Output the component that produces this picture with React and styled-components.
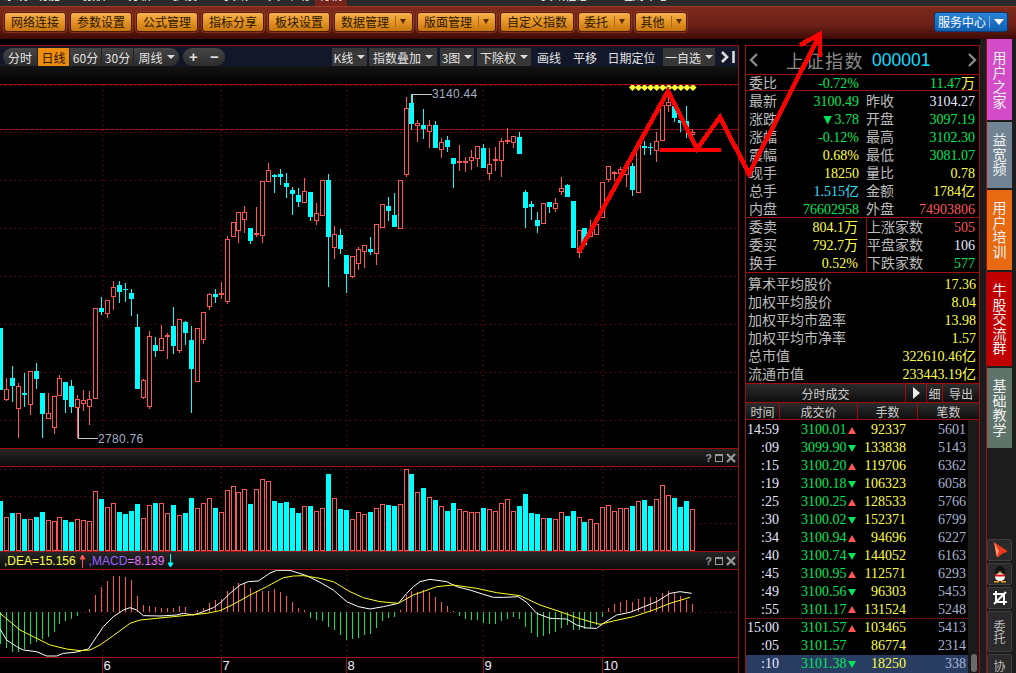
import React from "react";
import styled, { createGlobalStyle } from "styled-components";

const CJK = `"Noto Sans CJK SC", "Liberation Sans", sans-serif`;
const NUM = `"Liberation Serif", "Noto Sans CJK SC", serif`;
const LINE = "#a00d0d";
const RED = "#ff5555";
const CYAN = "#00ffff";
const GREEN = "#00e65c";
const YELLOW = "#ffff44";
const GRID = "#8c0000";

const Global = createGlobalStyle`
  html, body { margin: 0; padding: 0; background: #000; }
  * { box-sizing: border-box; }
`;

const Page = styled.div`
  position: relative;
  width: 1016px;
  height: 673px;
  overflow: hidden;
  background: #000;
  font-family: ${CJK};
  display: flex;
  flex-direction: column;
`;

const TopMenu = styled.div`
  height: 6px;
  flex: none;
  display: flex;
  overflow: hidden;
  background: #2b2b2b;
`;
const TopItem = styled.div`
  width: ${(p) => p.$w}px;
  flex: none;
  color: #fff;
  font-size: 12px;
  line-height: 14px;
  margin-top: -12px;
  padding-left: 4px;
  height: 18px;
  white-space: nowrap;
  background: ${(p) => (p.$active ? "#74241a" : "transparent")};
`;

const Toolbar = styled.div`
  height: 33px;
  flex: none;
  display: flex;
  align-items: center;
  gap: 4px;
  padding: 1px 8px 4px 4px;
  border-top: 1px solid #a03a22;
  background: linear-gradient(#7c2a1c, #6d2218 55%, #3f0a06);
`;
const ToolButton = styled.div`
  height: 20px;
  width: ${(p) => p.$w}px;
  flex: none;
  display: flex;
  align-items: center;
  justify-content: center;
  gap: 3px;
  border: 1px solid #4b1a08;
  border-radius: 3px;
  box-shadow: 0 0 0 1px rgba(165, 70, 40, 0.6);
  background: linear-gradient(#f7b04e, #e59523 50%, #c7750f);
  color: #2b1400;
  font-size: 12px;
  line-height: 18px;
`;
const ToolArrow = styled.span`
  margin-left: 3px;
  padding-left: 4px;
  border-left: 1px solid #a9691c;
  height: 11px;
  display: flex;
  align-items: center;
  &::after {
    content: "";
    border-left: 3.5px solid transparent;
    border-right: 3.5px solid transparent;
    border-top: 5px solid #5a2c06;
  }
`;
const ServiceButton = styled.div`
  margin-left: auto;
  width: 74px;
  height: 20px;
  flex: none;
  display: flex;
  align-items: center;
  border: 1px solid #0a3a70;
  border-radius: 3px;
  background: linear-gradient(#2a84d8, #0f5fb0);
  color: #fff;
  font-size: 12px;
`;
const ServiceLabel = styled.span`
  flex: 1;
  text-align: center;
  border-right: 1px solid #7fb0e0;
  line-height: 12px;
`;
const ServiceArrow = styled.span`
  width: 17px;
  display: flex;
  justify-content: center;
  &::after {
    content: "";
    border-left: 5px solid transparent;
    border-right: 5px solid transparent;
    border-top: 6px solid #fff;
  }
`;

const Main = styled.div`
  flex: 1;
  display: flex;
  min-height: 0;
`;
const ChartColumn = styled.div`
  width: 739px;
  flex: none;
  margin-top: 6px;
  display: flex;
  flex-direction: column;
  border-top: 1px solid ${LINE};
  border-right: 1px solid ${LINE};
`;
const SubBar = styled.div`
  height: 20px;
  flex: none;
  display: flex;
  align-items: center;
  padding: 2px 0 0 3px;
  background: #121829;
  color: #e2e2e2;
  font-size: 12px;
`;
const Pill = styled.div`
  height: 18px;
  display: flex;
  align-items: stretch;
  border-radius: 9px;
  overflow: hidden;
  margin-right: ${(p) => p.$mr || 0}px;
  background: linear-gradient(#454545, #2c2c2c);
`;
const Seg = styled.div`
  width: ${(p) => p.$w}px;
  display: flex;
  align-items: center;
  justify-content: center;
  gap: 4px;
  border-right: ${(p) => (p.$last ? "none" : "1px solid #222")};
  background: ${(p) => (p.$on ? "#ec8d10" : "transparent")};
  color: ${(p) => (p.$on ? "#2a1400" : "#e2e2e2")};
  font-size: 12px;
`;
const Caret = styled.i`
  border-left: 4px solid transparent;
  border-right: 4px solid transparent;
  border-top: 4px solid #ddd;
`;
const PillGlyph = styled.div`
  width: 21px;
  display: flex;
  align-items: center;
  justify-content: center;
  color: #ddd;
  font: 700 15px/16px "Liberation Sans", sans-serif;
`;
const BarBox = styled.div`
  height: 18px;
  width: ${(p) => p.$w}px;
  margin-left: ${(p) => p.$ml}px;
  display: flex;
  align-items: center;
  justify-content: center;
  gap: 4px;
  flex: none;
  white-space: nowrap;
  background: ${(p) => (p.$plain ? "transparent" : "#373737")};
`;
const Fade = styled.div`
  height: 19px;
  flex: none;
  background: linear-gradient(#141414, #000);
  border-bottom: 1px solid ${LINE};
`;
const PaneHead = styled.div`
  height: 19px;
  flex: none;
  display: flex;
  align-items: center;
  padding: 0 2px 0 4px;
  border-top: 1px solid ${LINE};
  border-bottom: 1px solid ${LINE};
  background: linear-gradient(#262626, #0c0c0c);
  font: 12px "Liberation Sans", sans-serif;
`;
const HeadText = styled.span`
  color: ${(p) => p.$c};
  white-space: pre;
`;
const HeadArrow = styled.svg`
  margin: 0 3px;
  flex: none;
`;
const PaneTools = styled.div`
  margin-left: auto;
  display: flex;
  align-items: center;
  gap: 3px;
  color: #9a9a9a;
  font: 700 11px "Liberation Sans", sans-serif;
`;
const ToolSquare = styled.i`
  width: 8px;
  height: 8px;
  border: 1px solid #9a9a9a;
  border-top-width: 2px;
`;
const ChartSvg = styled.svg`
  display: block;
  flex: none;
`;
const AxisBar = styled.div`
  height: 16px;
  flex: none;
  border-top: 1px solid ${LINE};
`;

const Quote = styled.div`
  width: 235px;
  flex: none;
  margin: 6px 0 0 6px;
  display: flex;
  flex-direction: column;
  border: 1px solid ${LINE};
  border-bottom: none;
  font-family: ${NUM};
  font-size: 14px;
  color: #bcbcbc;
`;
const QuoteHead = styled.div`
  height: 29px;
  flex: none;
  display: flex;
  align-items: center;
  padding: 0 3px;
  border-bottom: 1px solid ${LINE};
`;
const QuoteName = styled.span`
  margin-left: 27px;
  color: #8a8a8a;
  font-size: 18px;
  letter-spacing: 1.5px;
  font-family: ${CJK};
  white-space: nowrap;
`;
const QuoteCode = styled.span`
  margin-left: 8px;
  color: #10dcff;
  font-size: 17.5px;
  font-family: "Liberation Sans", sans-serif;
`;
const Chevron = styled.svg`
  flex: none;
  margin-left: ${(p) => p.$ml || 0}px;
`;
const Section = styled.div`
  flex: none;
  display: flex;
  flex-direction: column;
  padding: ${(p) => p.$pad || "0"};
  border-bottom: 1px solid ${LINE};
`;
const Row = styled.div`
  height: ${(p) => p.$h || 18}px;
  display: grid;
  grid-template-columns: ${(p) => p.$cols || "119px 114px"};
  line-height: ${(p) => p.$lh || 18}px;
  white-space: nowrap;
`;
const Cell = styled.div`
  display: flex;
  justify-content: space-between;
  padding: 0 ${(p) => p.$pr ?? 4}px 0 ${(p) => p.$pl ?? 1}px;
`;
const Val = styled.span`
  color: ${(p) => p.$c || "#e8e8ff"};
`;
const Split = styled.div`
  display: flex;
  flex-direction: column;
  border-right: ${(p) => (p.$sep ? `1px solid ${LINE}` : "none")};
  flex: none;
`;

const DarkRow = styled.div`
  height: ${(p) => p.$h}px;
  flex: none;
  display: flex;
  border-bottom: 1px solid ${LINE};
  background: linear-gradient(#2c2c2c, #0f0f0f);
  font-family: ${CJK};
  font-size: 12px;
  color: #ccc;
`;
const DarkCell = styled.div`
  width: ${(p) => p.$w}px;
  flex: ${(p) => (p.$w ? "none" : 1)};
  display: flex;
  align-items: center;
  justify-content: center;
  border-right: ${(p) => (p.$last ? "none" : `1px solid ${LINE}`)};
`;
const PlayTri = styled.i`
  border-top: 6px solid transparent;
  border-bottom: 6px solid transparent;
  border-left: 7px solid #eee;
`;
const TickWrap = styled.div`
  flex: 1;
  display: flex;
  min-height: 0;
`;
const TickList = styled.div`
  width: 222px;
  flex: none;
  padding-top: 1px;
`;
const TickRow = styled.div`
  height: 18px;
  display: flex;
  align-items: center;
  line-height: 18px;
  white-space: nowrap;
  background: ${(p) => (p.$sel ? "#293c62" : "transparent")};
  border-bottom: ${(p) => (p.$cut ? "1px dotted #c00" : "none")};
`;
const TTime = styled.span`
  width: 33px;
  text-align: right;
  color: #e8e8ff;
`;
const TPrice = styled.span`
  width: 47px;
  margin-left: 22px;
  color: ${GREEN};
`;
const TMark = styled.span`
  width: 16px;
  display: flex;
  align-items: center;
  &::after {
    content: "";
    display: ${(p) => (p.$d ? "block" : "none")};
    border-left: 4px solid transparent;
    border-right: 4px solid transparent;
    border-bottom: ${(p) => (p.$d === "u" ? `7px solid ${RED}` : "none")};
    border-top: ${(p) => (p.$d === "d" ? `7px solid ${GREEN}` : "none")};
  }
`;
const TVol = styled.span`
  width: 42px;
  text-align: right;
  color: ${YELLOW};
`;
const TCnt = styled.span`
  width: 60px;
  text-align: right;
  color: #a8b4d0;
`;
const Scroll = styled.div`
  flex: 1;
  background: #1b1b1b;
  display: flex;
  flex-direction: column;
  justify-content: flex-end;
  align-items: center;
  padding-bottom: 1px;
`;
const Thumb = styled.div`
  width: 6px;
  height: 18px;
  border-radius: 3px;
  background: #6a6a6a;
`;

const RailGap = styled.div`
  width: 7px;
  flex: none;
  background: #1c1c1c;
  border-right: 1px solid ${LINE};
`;
const Rail = styled.div`
  flex: 1;
  background: #1c1c1c;
  display: flex;
  flex-direction: column;
  padding: 0 4px 0 0;
  gap: 2px;
  overflow: hidden;
`;
const RailTab = styled.div`
  height: ${(p) => p.$h}px;
  flex: none;
  display: flex;
  align-items: center;
  justify-content: center;
  background: ${(p) => p.$bg};
  color: #f2f2f2;
  font-size: 14px;
  line-height: 14px;
  writing-mode: vertical-rl;
  text-orientation: upright;
  letter-spacing: 0.5px;
`;
const RailSpacer = styled.div`
  height: 87px;
  flex: none;
`;
const RailIcon = styled.div`
  height: ${(p) => p.$h || 22}px;
  flex: none;
  display: flex;
  align-items: center;
  justify-content: center;
  background: #2a2a2a;
  border: 1px solid #3d3d3d;
  border-radius: 2px;
  color: #bbb;
  font-size: 12px;
  line-height: 13px;
  writing-mode: ${(p) => (p.$text ? "vertical-rl" : "horizontal-tb")};
  text-orientation: upright;
`;
const Overlay = styled.svg`
  position: absolute;
  left: 0;
  top: 0;
  pointer-events: none;
`;

/* ---- data, in page pixels ---- */
const CANDLES = `c 328 328 390 390|r 378 389 400 401|c 366 378 386 402|r 383 386 409 438|c 373 393 395 407|r 371 371 405 415|c 363 371 379 389|c 393 393 414 438|r 393 413 419 419|r 396 396 428 434|r 375 378 396 396|c 382 382 400 413|c 380 386 407 413|r 395 399 408 438|r 390 400 404 411|r 391 399 407 425|r 308 308 399 399|c 297 308 312 315|r 300 300 314 318|r 281 287 297 310|c 281 285 292 303|c 283 289 290 302|c 289 293 299 316|c 314 327 389 389|r 379 380 398 399|r 331 336 407 409|c 337 345 351 357|r 325 338 351 351|r 333 335 337 359|c 307 326 346 354|r 319 319 351 353|c 321 322 333 345|c 326 340 369 413|r 328 328 382 382|r 312 312 340 344|r 293 294 307 310|c 289 294 297 303|r 282 293 295 299|r 236 239 302 304|r 222 222 237 237|r 212 212 231 243|r 206 212 220 233|c 228 228 241 244|r 207 233 235 237|r 181 181 236 243|r 163 170 182 182|c 174 175 177 193|c 169 174 177 185|c 173 183 187 198|c 187 190 194 215|c 188 195 202 207|r 178 191 203 203|c 192 192 217 221|r 203 213 221 225|r 180 180 216 216|c 174 180 237 287|r 226 234 248 259|c 229 235 249 254|c 255 255 274 293|r 256 256 277 278|r 247 249 264 270|r 245 245 252 268|c 237 249 252 255|r 224 224 254 265|r 204 204 228 228|c 197 206 211 221|c 193 215 227 227|r 180 180 229 229|r 97 108 175 177|c 94 103 124 130|r 120 123 126 142|c 109 125 129 139|r 120 125 132 148|c 121 125 148 148|r 138 142 150 158|c 136 140 147 152|c 158 158 164 188|r 145 161 162 171|r 157 161 163 172|r 150 157 161 170|r 146 146 159 167|c 144 148 168 168|r 148 164 174 180|r 147 159 161 171|r 138 141 161 177|r 128 140 142 144|r 136 136 143 148|c 132 137 154 154|c 190 192 208 228|c 201 204 207 220|c 212 220 226 233|r 203 203 224 224|c 202 202 207 213|r 198 203 209 212|r 177 188 192 195|c 184 185 197 197|c 201 201 248 248|r 230 230 253 258|c 228 228 245 245|r 220 230 237 237|r 224 224 235 235|r 182 182 218 218|r 166 166 180 182|r 171 172 173 181|r 167 169 174 174|r 165 165 175 187|c 163 166 190 196|r 145 145 193 193|c 141 146 148 155|c 143 147 148 155|r 132 141 151 162|r 99 105 141 141|r 97 102 106 112|c 106 106 118 122|c 112 120 123 132|c 106 121 129 138|r 129 132 135 145`
  .split("|")
  .map((s) => {
    const [t, a, b, c, d] = s.split(" ");
    return { up: t === "r", hi: +a, top: +b, bot: +c, lo: +d };
  });

const VOL = "c168 r216 c204 r205 c222 r222 c216 c201 r226 r229 r217 c225 c231 r223 r226 r229 r139 c162 r187 r175 c201 c207 c198 c177 r220 r181 c174 r175 r205 c180 r211 c204 c159 r190 r175 r160 c189 r202 r136 r124 r142 r133 c177 r133 r103 r109 c168 c174 c171 c189 c204 r184 c183 r198 r190 c87 r160 c192 c195 r223 r202 r207 c201 r190 r178 c180 c183 r178 r73 c87 r142 c129 r157 c165 r184 c198 c174 r193 r199 r202 r202 c189 r193 r199 r175 r163 r199 c183 c147 c204 c207 r220 c219 r223 r202 c213 c198 r217 c231 r223 r235 r187 r181 r199 r190 r190 c183 r169 c165 c183 r163 r121 r151 c159 c186 c168 r193"
  .split(" ")
  .map((s) => ({ up: s[0] === "r", top: 445 + +s.slice(1) / 3 }));

const MACD = [598,610,622,620,612,597,590,582,576,560,538,527,522,512,0,491,450,426,408,393,393,396,405,453,480,483,486,489,489,489,483,486,500,495,489,474,465,462,438,423,414,414,429,438,438,438,432,441,453,471,489,495,519,525,528,546,555,570,585,582,579,570,567,549,528,520,516,495,450,438,441,435,440,456,471,483,499,513,522,525,525,535,537,537,528,522,516,522,546,564,576,573,567,561,549,540,555,555,552,549,540,516,489,477,471,465,471,462,456,456,456,444,438,441,453,465,477];

const toPts = (arr, off = 0) =>
  arr.map(([x, y]) => `${(x + off) / 3},${445 + y / 3}`).join(" ");

const WHITE_L = [[0,552],[20,585],[50,605],[70,615],[110,620],[140,633],[170,633],[190,625],[225,622],[265,612],[290,575],[310,545],[340,515],[370,495],[390,488],[410,495],[430,512],[480,513],[530,510],[550,505],[580,510],[610,500],[640,488],[665,470],[690,445],[720,420],[745,410],[775,408],[810,384],[830,376],[870,376],[920,392],[960,412],[1000,435],[1040,470],[1075,485],[1110,492]];
const WHITE_R = [[0,492],[40,485],[85,475],[110,445],[130,425],[150,410],[180,403],[230,410],[260,425],[300,435],[340,448],[370,457],[400,457],[445,455],[470,472],[500,505],[540,520],[590,522],[620,540],[650,549],[680,550],[700,535],[740,510],[780,502],[810,490],[860,470],[900,445],[930,440],[965,445]];
const YEL_L = [[0,505],[30,530],[60,555],[100,575],[150,600],[200,612],[240,617],[270,615],[300,600],[340,572],[390,535],[420,525],[470,520],[520,515],[570,510],[620,505],[660,497],[700,478],[750,450],[800,425],[850,398],[880,393],[910,392],[960,400],[1000,410],[1050,440],[1090,458],[1110,463]];
const YEL_R = [[0,463],[30,470],[85,475],[130,450],[200,425],[250,420],[320,430],[380,443],[450,452],[510,480],[570,500],[620,518],[660,530],[690,538],[730,528],[790,515],[850,495],[900,475],[960,457]];

const xAt = (i) => Math.floor(0.33 + 5.966 * i);
const VGRID = [102, 221, 346, 483, 602];

function GridLines({ y1, y2, rows }) {
  return (
    <g stroke={GRID} strokeDasharray="1 4" shapeRendering="crispEdges">
      {VGRID.map((x) => (
        <line key={x} x1={x + 0.5} x2={x + 0.5} y1={y1} y2={y2} />
      ))}
      {rows.map((y) => (
        <line key={y} x1={0} x2={738} y1={y + 0.5} y2={y + 0.5} />
      ))}
    </g>
  );
}

function Candle({ c, x }) {
  const col = c.up ? RED : CYAN;
  return (
    <g shapeRendering="crispEdges">
      <line x1={x + 0.5} x2={x + 0.5} y1={c.hi} y2={c.top} stroke={col} />
      <line x1={x + 0.5} x2={x + 0.5} y1={c.bot} y2={c.lo} stroke={col} />
      {c.up ? (
        <rect x={x - 1.5} y={c.top + 0.5} width={4} height={Math.max(c.bot - c.top - 1, 1)} fill="#000" stroke={col} />
      ) : (
        <rect x={x - 2} y={c.top} width={5} height={Math.max(c.bot - c.top, 1)} fill={col} />
      )}
    </g>
  );
}

function MainChart() {
  return (
    <ChartSvg width={738} height={363} viewBox="0 85 738 363">
      <GridLines y1={85} y2={448} rows={[85, 132, 180, 228, 276, 324, 372, 420]} />
      <line x1={0} x2={738} y1={129.5} y2={129.5} stroke="#b00d0d" strokeDasharray="4 1" shapeRendering="crispEdges" />
      {CANDLES.map((c, i) => (
        <Candle key={i} c={c} x={xAt(i)} />
      ))}
      <polyline points="412,103 412,94 432,94" fill="none" stroke="#c8c8c8" shapeRendering="crispEdges" />
      <text x={432} y={98} fill="#a3aec4" fontSize={12} fontFamily="Liberation Sans" letterSpacing={0.3}>3140.44</text>
      <polyline points="78,408 78,438.5 98,438.5" fill="none" stroke="#c8c8c8" shapeRendering="crispEdges" />
      <text x={98} y={443} fill="#a3aec4" fontSize={12} fontFamily="Liberation Sans" letterSpacing={0.3}>2780.76</text>
      {Array.from({ length: 11 }, (_, i) => {
        const x = 632.5 + i * 6.05;
        return <polygon key={i} points={`${x},84 ${x + 3.6},87.5 ${x},91 ${x - 3.6},87.5`} fill="#ffff33" />;
      })}
    </ChartSvg>
  );
}

function VolumeChart() {
  return (
    <ChartSvg width={738} height={84} viewBox="0 467 738 84">
      <GridLines y1={467} y2={551} rows={[469, 496, 523]} />
      {VOL.map((b, i) => {
        const x = xAt(i);
        const top = Math.round(b.top);
        return b.up ? (
          <rect key={i} x={x - 1.5} y={top + 0.5} width={4} height={549.5 - top} fill="#000" stroke={RED} shapeRendering="crispEdges" />
        ) : (
          <rect key={i} x={x - 2} y={top} width={5} height={551 - top} fill={CYAN} shapeRendering="crispEdges" />
        );
      })}
    </ChartSvg>
  );
}

function MacdChart() {
  const zero = 612;
  return (
    <ChartSvg width={738} height={87} viewBox="0 570 738 87">
      <GridLines y1={570} y2={657} rows={[612]} />
      {MACD.map((z, i) => {
        if (!z) return null;
        const y = Math.round(445 + z / 3);
        const up = y < zero;
        return (
          <rect key={i} x={xAt(i)} y={up ? y : zero} width={1} height={Math.abs(y - zero)} fill={up ? RED : GREEN} shapeRendering="crispEdges" />
        );
      })}
      <polyline points={toPts(WHITE_L) + " " + toPts(WHITE_R, 1110)} fill="none" stroke="#fff" />
      <polyline points={toPts(YEL_L) + " " + toPts(YEL_R, 1110)} fill="none" stroke="#ffff22" />
    </ChartSvg>
  );
}

function Axis() {
  const labels = [["6", 102], ["7", 221], ["8", 346], ["9", 483], ["10", 602]];
  return (
    <AxisBar>
      <ChartSvg width={738} height={15} viewBox="0 658 738 15">
        {labels.map(([t, x]) => (
          <g key={t}>
            <line x1={x + 0.5} x2={x + 0.5} y1={658} y2={673} stroke={LINE} shapeRendering="crispEdges" />
            <text x={x + 1.5} y={670} fill="#eef" fontSize={13} fontFamily="Liberation Sans">{t}</text>
          </g>
        ))}
      </ChartSvg>
    </AxisBar>
  );
}

function PaneControls() {
  return (
    <PaneTools>
      <span>?</span>
      <ToolSquare />
      <svg width="10" height="10" viewBox="0 0 10 10">
        <path d="M1 1 9 9M9 1 1 9" stroke="#9a9a9a" strokeWidth="2.2" />
      </svg>
    </PaneTools>
  );
}

const TOOLS = [
  ["网络连接", 62], ["参数设置", 62], ["公式管理", 62], ["指标分享", 62], ["板块设置", 62],
  ["数据管理", 79, true], ["版面管理", 79, true], ["自定义指数", 74], ["委托", 53, true], ["其他", 52, true],
];
const TOP = [["系统", 32], ["功能", 47], ["报价", 45], ["分析", 45], ["扩展", 51], ["资讯", 32], ["工具", 30], ["帮助", 33]];

const QUOTES = [
  ["最新", "3100.49", GREEN, "昨收", "3104.27", "#e8e8ff"],
  ["涨跌", "▼3.78", GREEN, "开盘", "3097.19", GREEN],
  ["涨幅", "-0.12%", GREEN, "最高", "3102.30", GREEN],
  ["震幅", "0.68%", YELLOW, "最低", "3081.07", GREEN],
  ["现手", "18250", YELLOW, "量比", "0.78", YELLOW],
  ["总手", "1.515亿", "#33ddff", "金额", "1784亿", YELLOW],
  ["内盘", "76602958", GREEN, "外盘", "74903806", RED],
];
const AVG = [
  ["算术平均股价", "17.36"], ["加权平均股价", "8.04"], ["加权平均市盈率", "13.98"],
  ["加权平均市净率", "1.57"], ["总市值", "322610.46亿"], ["流通市值", "233443.19亿"],
];
const TICKS = [
  ["14:59", "3100.01", "u", "92337", "5601"], [":09", "3099.90", "d", "133838", "5143"],
  [":15", "3100.20", "u", "119706", "6362"], [":19", "3100.18", "d", "106323", "6058"],
  [":25", "3100.25", "u", "128533", "5766"], [":30", "3100.02", "d", "152371", "6799"],
  [":34", "3100.94", "u", "94696", "6227"], [":40", "3100.74", "d", "144052", "6163"],
  [":45", "3100.95", "u", "112571", "6293"], [":49", "3100.56", "d", "96303", "5453"],
  [":55", "3101.17", "u", "131524", "5248"], ["15:00", "3101.57", "u", "103465", "5413"],
  [":05", "3101.57", "", "86774", "2314"], [":10", "3101.38", "d", "18250", "338"],
];

export default function App() {
  return (
    <Page>
      <Global />
      <TopMenu>
        {TOP.map(([t, w]) => (
          <TopItem key={t} $w={w}>{t}</TopItem>
        ))}
        <TopItem $w={32} $active>行情</TopItem>
        <TopItem $w={190} />
        <TopItem $w={80}>资讯信息</TopItem>
        <TopItem $w={80}>理财中心</TopItem>
      </TopMenu>
      <Toolbar>
        {TOOLS.map(([t, w, arrow]) => (
          <ToolButton key={t} $w={w}>
            {t}
            {arrow && <ToolArrow />}
          </ToolButton>
        ))}
        <ServiceButton>
          <ServiceLabel>服务中心</ServiceLabel>
          <ServiceArrow />
        </ServiceButton>
      </Toolbar>
      <Main>
        <ChartColumn>
          <SubBar>
            <Pill $mr={4}>
              <Seg $w={35}>分时</Seg>
              <Seg $w={32} $on>日线</Seg>
              <Seg $w={32}>60分</Seg>
              <Seg $w={32}>30分</Seg>
              <Seg $w={45} $last>周线<Caret /></Seg>
            </Pill>
            <Pill>
              <PillGlyph>+</PillGlyph>
              <PillGlyph>−</PillGlyph>
            </Pill>
            <BarBox $w={35} $ml={107}>K线<Caret /></BarBox>
            <BarBox $w={68} $ml={2}>指数叠加<Caret /></BarBox>
            <BarBox $w={34} $ml={3}>3图<Caret /></BarBox>
            <BarBox $w={54} $ml={3}>下除权<Caret /></BarBox>
            <BarBox $w={24} $ml={6} $plain>画线</BarBox>
            <BarBox $w={24} $ml={12} $plain>平移</BarBox>
            <BarBox $w={49} $ml={10} $plain>日期定位</BarBox>
            <BarBox $w={52} $ml={7}>一自选<Caret /></BarBox>
            <svg width="15" height="12" viewBox="0 0 15 12" style={{ marginLeft: 6 }}>
              <path d="M1 1l5 5-5 5M12.5 0v12" fill="none" stroke="#ddd" strokeWidth="2.6" />
            </svg>
          </SubBar>
          <Fade />
          <MainChart />
          <PaneHead>
            <PaneControls />
          </PaneHead>
          <VolumeChart />
          <PaneHead>
            <HeadText $c="#ffff44">,DEA=15.156</HeadText>
            <HeadArrow width="7" height="14" viewBox="0 0 7 14">
              <path d="M3.5 2v12M1 5l2.5-4L6 5z" stroke={RED} fill={RED} />
            </HeadArrow>
            <HeadText $c="#9a60ff">,MACD</HeadText>
            <HeadText $c="#e870ff">=8.139</HeadText>
            <HeadArrow width="7" height="14" viewBox="0 0 7 14">
              <path d="M3.5 0v12M1 9l2.5 4L6 9z" stroke={CYAN} fill={CYAN} />
            </HeadArrow>
            <PaneControls />
          </PaneHead>
          <MacdChart />
          <Axis />
        </ChartColumn>

        <Quote>
          <QuoteHead>
            <Chevron width="10" height="14" viewBox="0 0 10 14">
              <path d="M8 1 2 7l6 6" fill="none" stroke="#8a8a8a" strokeWidth="2.4" />
            </Chevron>
            <QuoteName>上证指数</QuoteName>
            <QuoteCode>000001</QuoteCode>
            <Chevron $ml={37} width="10" height="14" viewBox="0 0 10 14">
              <path d="M2 1l6 6-6 6" fill="none" stroke="#8a8a8a" strokeWidth="2.4" />
            </Chevron>
          </QuoteHead>
          <Section>
            <Row $h={15}>
              <Cell $pl={3} $pr={6}>委比<Val $c={GREEN}>-0.72%</Val></Cell>
              <Cell><span /><Val $c={GREEN}>11.47<Val $c={YELLOW}>万</Val></Val></Cell>
            </Row>
          </Section>
          <Section>
            {QUOTES.map((q) => (
              <Row key={q[0]} $lh={21}>
                <Cell $pl={3} $pr={6}>{q[0]}<Val $c={q[2]}>{q[1]}</Val></Cell>
                <Cell>{q[3]}<Val $c={q[5]}>{q[4]}</Val></Cell>
              </Row>
            ))}
          </Section>
          <Section>
            <Row $h={54} $cols="121px 112px">
              <Split $sep>
                <Row $cols="1fr" $lh={20}><Cell $pl={3} $pr={8}>委卖<Val $c={YELLOW}>804.1万</Val></Cell></Row>
                <Row $cols="1fr" $lh={20}><Cell $pl={3} $pr={8}>委买<Val $c={YELLOW}>792.7万</Val></Cell></Row>
                <Row $cols="1fr" $lh={20}><Cell $pl={3} $pr={8}>换手<Val $c={YELLOW}>0.52%</Val></Cell></Row>
              </Split>
              <Split>
                <Row $cols="1fr" $lh={20}><Cell $pl={0}>上涨家数<Val $c={RED}>505</Val></Cell></Row>
                <Row $cols="1fr" $lh={20}><Cell $pl={0}>平盘家数<Val>106</Val></Cell></Row>
                <Row $cols="1fr" $lh={20}><Cell $pl={0}>下跌家数<Val $c={GREEN}>577</Val></Cell></Row>
              </Split>
            </Row>
          </Section>
          <Section $pad="2px 0 0">
            {AVG.map(([a, b]) => (
              <Row key={a} $cols="1fr" $lh={20}>
                <Cell $pl={2} $pr={3}>{a}<Val $c={YELLOW}>{b}</Val></Cell>
              </Row>
            ))}
          </Section>
          <DarkRow $h={19}>
            <DarkCell>分时成交</DarkCell>
            <DarkCell $w={21}><PlayTri /></DarkCell>
            <DarkCell $w={16}>细</DarkCell>
            <DarkCell $w={36} $last>导出</DarkCell>
          </DarkRow>
          <DarkRow $h={17}>
            <DarkCell $w={34}>时间</DarkCell>
            <DarkCell $w={78}>成交价</DarkCell>
            <DarkCell $w={60}>手数</DarkCell>
            <DarkCell $last>笔数</DarkCell>
          </DarkRow>
          <TickWrap>
            <TickList>
              {TICKS.map((t, i) => (
                <TickRow key={i} $sel={i === 13} $cut={i === 10}>
                  <TTime>{t[0]}</TTime>
                  <TPrice>{t[1]}</TPrice>
                  <TMark $d={t[2]} />
                  <TVol>{t[3]}</TVol>
                  <TCnt>{t[4]}</TCnt>
                </TickRow>
              ))}
            </TickList>
            <Scroll>
              <Thumb />
            </Scroll>
          </TickWrap>
        </Quote>

        <RailGap />
        <Rail>
          <RailTab $h={81} $bg="#d24cc8">用户之家</RailTab>
          <RailTab $h={66} $bg="#728494">益宽频</RailTab>
          <RailTab $h={80} $bg="#e76a12">用户培训</RailTab>
          <RailTab $h={94} $bg="#c00000">牛股交流群</RailTab>
          <RailTab $h={80} $bg="#5f7468">基础教学</RailTab>
          <RailSpacer />
          <RailIcon>
            <svg width="18" height="18" viewBox="0 0 18 18">
              <path d="M3 1 15 9l1.5 2-4 1-6 4.5L5 14z" fill="#e8391c" />
              <path d="M3 1l5 9-2 6z" fill="#ff9a70" />
            </svg>
          </RailIcon>
          <RailIcon>
            <svg width="18" height="18" viewBox="0 0 18 18">
              <ellipse cx="9" cy="7" rx="5" ry="6" fill="#111" />
              <ellipse cx="9" cy="12" rx="5" ry="4" fill="#fff" />
              <path d="M4 9.5h10v2H4z" fill="#e01010" />
              <path d="M3 16h5v1.5H3zM10 16h5v1.5h-5z" fill="#f3a010" />
              <path d="M7 6.5h4l-2 2z" fill="#f3a010" />
            </svg>
          </RailIcon>
          <RailIcon>
            <svg width="16" height="16" viewBox="0 0 16 16">
              <path d="M1 4h11v11M4 1v11h11M2 14 14 2" fill="none" stroke="#fff" strokeWidth="2" />
            </svg>
          </RailIcon>
          <RailIcon $h={41} $text>委托</RailIcon>
          <RailIcon $h={24} $text>协</RailIcon>
        </Rail>
      </Main>
      <Overlay width={1016} height={673} viewBox="0 0 1016 673">
        <polyline
          points="579,252 668,91 697,149 720,117 749,174 820,34"
          fill="none"
          stroke="#ff0000"
          strokeWidth="4.5"
          shapeRendering="crispEdges"
        />
        <polyline points="660,150 721,150" fill="none" stroke="#ff0000" strokeWidth="4" shapeRendering="crispEdges" />
        <polyline points="800,45 820,34 820,57" fill="none" stroke="#ff0000" strokeWidth="4.5" shapeRendering="crispEdges" />
      </Overlay>
    </Page>
  );
}
